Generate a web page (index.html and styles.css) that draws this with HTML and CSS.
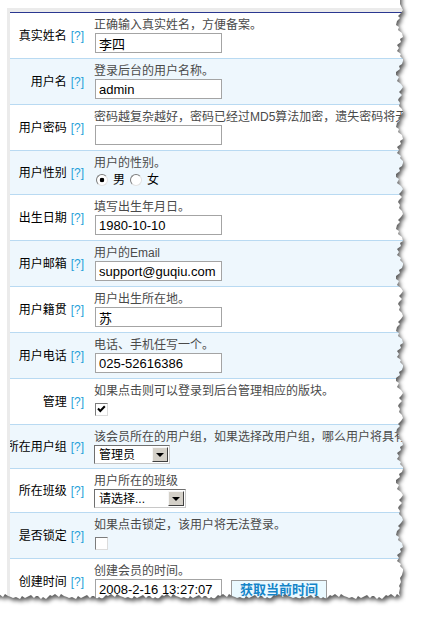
FILE: index.html
```html
<!DOCTYPE html>
<html lang="zh-CN">
<head>
<meta charset="UTF-8" />
<meta name="viewport" content="width=device-width,initial-scale=1.0" />
<title>用户资料</title>
<link rel="stylesheet" href="styles.css">
</head>
<body>
<div class="page">
  <div class="frame">
    <div class="form">
      <div class="row">
        <div class="label">真实姓名<span class="tip">[?]</span></div>
        <div class="field">
          <p class="hint">正确输入真实姓名，方便备案。</p>
          <input class="text" type="text" value="李四">
        </div>
      </div>
      <div class="row">
        <div class="label">用户名<span class="tip">[?]</span></div>
        <div class="field">
          <p class="hint">登录后台的用户名称。</p>
          <input class="text" type="text" value="admin">
        </div>
      </div>
      <div class="row">
        <div class="label">用户密码<span class="tip">[?]</span></div>
        <div class="field">
          <p class="hint">密码越复杂越好，密码已经过MD5算法加密，遗失密码将无法找回。</p>
          <input class="text" type="password" value="">
        </div>
      </div>
      <div class="row">
        <div class="label">用户性别<span class="tip">[?]</span></div>
        <div class="field">
          <p class="hint">用户的性别。</p>
          <div class="choice">
            <input class="radio" type="radio" name="sex" checked><span class="opt">男</span>
            <input class="radio" type="radio" name="sex"><span class="opt">女</span>
          </div>
        </div>
      </div>
      <div class="row">
        <div class="label">出生日期<span class="tip">[?]</span></div>
        <div class="field">
          <p class="hint">填写出生年月日。</p>
          <input class="text" type="text" value="1980-10-10">
        </div>
      </div>
      <div class="row">
        <div class="label">用户邮箱<span class="tip">[?]</span></div>
        <div class="field">
          <p class="hint">用户的Email</p>
          <input class="text" type="text" value="support@guqiu.com">
        </div>
      </div>
      <div class="row">
        <div class="label">用户籍贯<span class="tip">[?]</span></div>
        <div class="field">
          <p class="hint">用户出生所在地。</p>
          <input class="text" type="text" value="苏">
        </div>
      </div>
      <div class="row">
        <div class="label">用户电话<span class="tip">[?]</span></div>
        <div class="field">
          <p class="hint">电话、手机任写一个。</p>
          <input class="text" type="text" value="025-52616386">
        </div>
      </div>
      <div class="row">
        <div class="label">管理<span class="tip">[?]</span></div>
        <div class="field">
          <p class="hint">如果点击则可以登录到后台管理相应的版块。</p>
          <div class="checkline">
            <span class="box"><svg width="11" height="11" viewBox="0 0 11 11"><polyline points="2,4.5 4.3,7 8.8,2.2" fill="none" stroke="#000" stroke-width="2"/></svg></span>
          </div>
        </div>
      </div>
      <div class="row">
        <div class="label">所在用户组<span class="tip">[?]</span></div>
        <div class="field tight">
          <p class="hint">该会员所在的用户组，如果选择改用户组，哪么用户将具有该组的权限。</p>
          <div class="select group"><span>管理员</span><span class="arrow"></span></div>
        </div>
      </div>
      <div class="row">
        <div class="label">所在班级<span class="tip">[?]</span></div>
        <div class="field tight">
          <p class="hint">用户所在的班级</p>
          <div class="select klass"><span>请选择...</span><span class="arrow"></span></div>
        </div>
      </div>
      <div class="row">
        <div class="label">是否锁定<span class="tip">[?]</span></div>
        <div class="field">
          <p class="hint">如果点击锁定，该用户将无法登录。</p>
          <div class="checkline"><span class="box"></span></div>
        </div>
      </div>
      <div class="row">
        <div class="label">创建时间<span class="tip">[?]</span></div>
        <div class="field">
          <p class="hint">创建会员的时间。</p>
          <div class="inline">
            <input class="text" type="text" value="2008-2-16 13:27:07">
            <button class="btn" type="button">获取当前时间</button>
          </div>
        </div>
      </div>
    </div>
  </div>

  <!-- torn paper edge: white outside the sheet, soft shadow along the tear -->
  <svg class="tear" width="423" height="621" viewBox="0 0 423 621">
    <defs>
      <path id="sheet" d="M-10,-10H400V4l3,6
        -2,3 -3,3 2,2 -3,3 -1,4 3,2 -1,3 4,3 1,4 -3,2 1,3 -4,3 2,3 -2,3 4,3 -1,2 3,3 0,2
        -1,3 -3,2 1,3 -4,3 0,3 3,2 -2,4 4,3 2,3 -2,3 -2,2 3,3 -3,3 -1,2 2,3 -1,3 3,3 1,3
        -2,3 -3,3 2,2 -3,3 -1,4 3,2 -1,3 4,3 1,4 -3,2 1,3 -4,3 2,3 -2,3 4,3 -1,2 3,3 0,2
        -1,3 -3,2 1,3 -4,3 0,3 3,2 -2,4 4,3 2,3 -2,3 -2,2 3,3 -3,3 -1,2 2,3 -1,3 3,3 1,3
        -2,3 -3,3 2,2 -3,3 -1,4 3,2 -1,3 4,3 1,4 -3,2 1,3 -4,3 2,3 -2,3 4,3 -1,2 3,3 0,2
        -1,3 -3,2 1,3 -4,3 0,3 3,2 -2,4 4,3 2,3 -2,3 -2,2 3,3 -3,3 -1,2 2,3 -1,3 3,3 1,3
        -2,3 -3,3 2,2 -3,3 -1,4 3,2 -1,3 4,3 1,4 -3,2 1,3 -4,3 2,3 -2,3 4,3 -1,2 3,3 0,2
        -1,3 -3,2 1,3 -4,3 0,3 3,2 -2,4 4,3 2,3 -2,3 -2,2 3,3 -3,3 -1,2 2,3 -1,3 3,3 1,3
        -2,3 -3,3 2,2 -3,3 -1,4 3,2 -1,3 4,3 1,4 -3,2 1,3 -4,3 2,3 -2,3 4,3 -1,2 3,3 0,2
        -1,3 -3,2 1,3 -4,3 0,3 3,2 -2,4 4,3 2,3 -2,3 -2,2 3,3 -3,3 -1,2 2,3 -1,3 3,3 1,3
        -2,3 -3,3 2,2 -3,3 -1,4 3,2 -1,3 4,3 1,4 -3,2 1,3 -4,3 2,3 -2,3 4,3 -1,2 3,3 0,2
        -1,4 -2,3 1,4 -2,4 1,2 -1,5 1,3
        -3,-2 -2,3 -4,-3 -3,2 -2,-1 -4,4 -3,-2 -2,2 -3,-3 -2,0
        -2,2 -3,-3 -2,1 -4,2 -3,-2 -2,3 -4,-2 -3,1 -2,-1 -3,-1
        -3,-2 -2,3 -4,-3 -3,2 -2,-1 -4,4 -3,-2 -2,2 -3,-3 -2,0
        -2,2 -3,-3 -2,1 -4,2 -3,-2 -2,3 -4,-2 -3,1 -2,-1 -3,-1
        -3,-2 -2,3 -4,-3 -3,2 -2,-1 -4,4 -3,-2 -2,2 -3,-3 -2,0
        -2,2 -3,-3 -2,1 -4,2 -3,-2 -2,3 -4,-2 -3,1 -2,-1 -3,-1
        -3,-2 -2,3 -4,-3 -3,2 -2,-1 -4,4 -3,-2 -2,2 -3,-3 -2,0
        -2,2 -3,-3 -2,1 -4,2 -3,-2 -2,3 -4,-2 -3,1 -2,-1 -3,-1
        -3,-2 -2,3 -4,-3 -3,2 -2,-1 -4,4 -3,-2 -2,2 -3,-3 -2,0
        -2,2 -3,-3 -2,1 -4,2 -3,-2 -2,3 -4,-2 -3,1 -2,-1 -3,-1
        -3,-2 -2,3 -4,-3 -3,2 -2,-1 -4,4 -3,-2 -2,2 -3,-3 -2,0
        -2,2 -3,-3 -2,1 -4,2 -3,-2 -2,3 -4,-2 -3,1 -2,-1 -3,-1
        -3,-2 -2,3 -4,-3 -3,2 -2,-1 -4,4 -3,-2 -2,2 -3,-3 -2,0
        -2,2 -3,-3 -2,1 -4,2 -3,-2 -2,3 -4,-2 -3,1 -2,-1 -3,-1
        -3,-2 -2,3 -4,-3 -3,2 -2,-1 -4,4 -3,-2 -2,2 -3,-3 -2,0
        V-10Z"/>
      <filter id="soft" x="-5%" y="-5%" width="110%" height="110%">
        <feGaussianBlur stdDeviation="2"/>
      </filter>
      <mask id="outside" maskUnits="userSpaceOnUse" x="0" y="0" width="423" height="621">
        <rect width="423" height="621" fill="#fff"/>
        <use href="#sheet" fill="#000"/>
      </mask>
    </defs>
    <g mask="url(#outside)">
      <rect width="423" height="621" fill="#fff"/>
      <use href="#sheet" fill="#000" fill-opacity=".65" transform="translate(2,3)" filter="url(#soft)"/>
    </g>
  </svg>
</div>
</body>
</html>
```

FILE: styles.css
```css
:root{
  --line:#b9daf2;--alt:#eef7fd;--tip:#1f9fd9;--hint:#4a4a4a;
  --font:"Liberation Sans","Noto Sans CJK SC",sans-serif
}
html,body{margin:0;overflow:hidden;background:#fff}
body{font:12px/16px var(--font);color:#000}
.page{position:relative;width:423px;height:621px;overflow:hidden}

/* sheet */
.frame{margin:8px 0 0 7px;border-top:4px solid #ebebeb;border-left:3px solid #ebebeb;width:540px}
.form{border-top:1px solid #2a3790}
.row{display:grid;grid-template-columns:80px 1fr;border-bottom:1px solid var(--line)}
.row:nth-child(even){background:var(--alt)}
.label{display:flex;justify-content:flex-end;align-items:center;padding-right:6px;white-space:nowrap;overflow:clip}
.tip{color:var(--tip);margin-left:4px}
.field{padding:4px 0 5px 4px;white-space:nowrap}
.field.tight{padding-bottom:4px}
.hint{margin:0;height:16px;color:var(--hint)}

/* controls */
.text{
  display:block;box-sizing:border-box;width:127px;height:20px;margin:0 0 0 1px;padding:0 3px;
  border:1px solid #a4a4a4;background:#fff;color:#000;font:13px var(--font);outline:none
}
.choice{display:flex;align-items:center;height:18px}
.radio{
  appearance:none;box-sizing:border-box;width:12px;height:12px;margin:0 5px 0 2px;border-radius:50%;
  border:1px solid;border-color:#7c7c7c #e2e2e2 #e2e2e2 #7c7c7c;background:#fff
}
.radio:checked{background:radial-gradient(circle,#000 0 2px,#fff 2.6px)}
.opt{margin-right:3px}
.checkline{display:flex;align-items:center;height:20px}
.box{
  display:inline-flex;box-sizing:border-box;width:13px;height:13px;margin-left:1px;
  border:1px solid;border-color:#7c7c7c #dcdcdc #dcdcdc #7c7c7c;background:#fff
}
.select{
  display:flex;align-items:center;box-sizing:border-box;height:19px;padding-left:4px;
  border:1px solid;border-color:#6f6f6f #c8c8c8 #c8c8c8 #6f6f6f;background:#fff
}
.select.group{width:76px}.select.klass{width:92px}
.arrow{
  display:flex;align-items:center;justify-content:center;box-sizing:border-box;
  width:16px;height:15px;margin:0 1px 0 auto;background:#d4d0c8;
  border:1px solid;border-color:#f6f6f6 #404040 #404040 #f6f6f6
}
.arrow::after{content:"";border:4px solid transparent;border-top-color:#000;border-bottom:0;margin-top:1px}
.inline{display:flex;align-items:center;gap:9px}
.btn{
  box-sizing:border-box;width:96px;height:19px;padding:0;border:1px solid #9a9a9a;
  background:#eaf9ff;color:#1484c8;font:bold 13px/16px "Noto Sans CJK SC",sans-serif
}

.tear{position:absolute;top:0;left:0;pointer-events:none}
```
